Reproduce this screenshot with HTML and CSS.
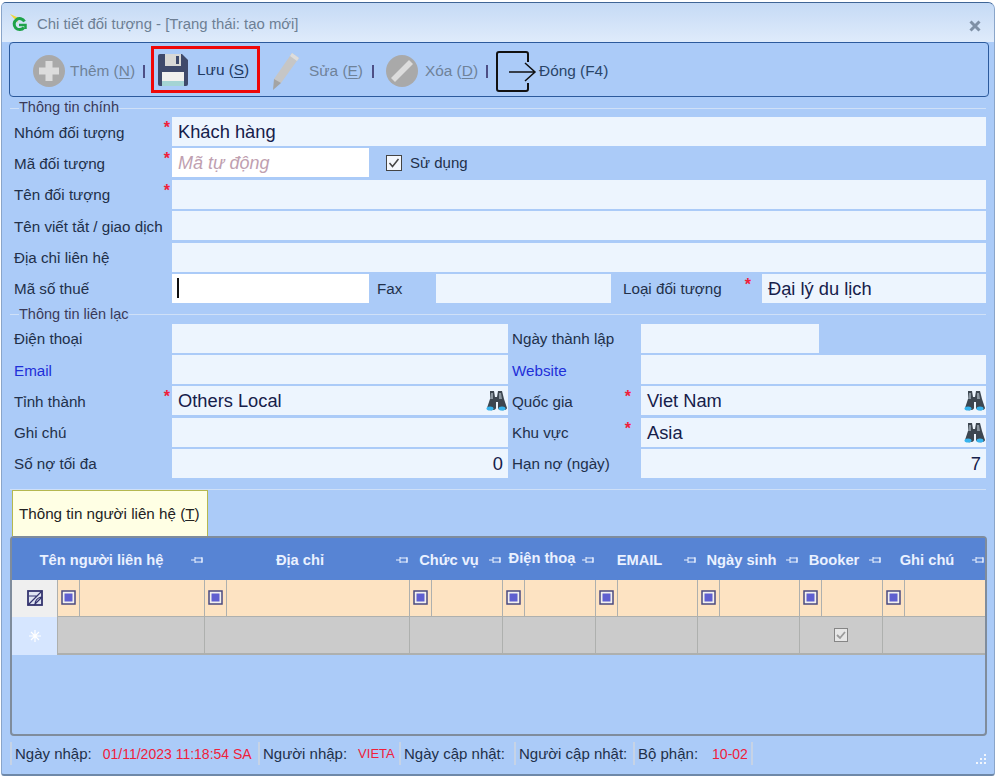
FILE: index.html
```html
<!DOCTYPE html>
<html lang="vi">
<head>
    <meta charset="UTF-8">
    <meta name="viewport" content="width=device-width, initial-scale=1.0">
    <title>Chi tiết đối tượng</title>
    <link rel="stylesheet" href="styles.css">
</head>
<body>

<svg class="defs" width="0" height="0">
    <symbol id="pin" viewBox="0 0 12 10">
        <path d="M0 5H4M4 2V8M4 3H11V7H4M11 2V8" fill="none" stroke="#eaf1ff" stroke-width="1"/>
    </symbol>
    <symbol id="binoc" viewBox="0 0 24 22">
        <path d="M6 1h4l1 6h2l1-6h4l2 8 3 9c0 3-9 3-9 0v-6h-2v6c0 3-9 3-9 0l3-9z" fill="#3d4650"/>
        <path d="M7 3h2v6H6zM15 3h2l1 6h-3z" fill="#8b96a0"/>
        <ellipse cx="6" cy="18.500" rx="3.500" ry="2" fill="#37b4ee"/>
        <ellipse cx="18" cy="18.500" rx="3.500" ry="2" fill="#37b4ee"/>
    </symbol>
    <symbol id="filter" viewBox="0 0 15 15">
        <rect x="1" y="1" width="13" height="13" fill="#f2f0ee" stroke="#4a4a80" stroke-width="1.500"/>
        <rect x="3.500" y="3.500" width="8" height="8" fill="#5f5fd0"/>
    </symbol>
</svg>

<div class="window">
    <div class="titlebar">
        <svg class="logo" width="20" height="18" viewBox="0 0 20 18">
            <path d="M1 0L12 5 8 6 9 9z" fill="#f0d83c"/>
            <path d="M15.500 7.500A5.500 5.500 0 1 0 15 13.500" fill="none" stroke="#1fa34a" stroke-width="3"/>
            <path d="M10 11h6.500v4" fill="none" stroke="#1fa34a" stroke-width="2.500"/>
        </svg>
        <span class="title-text">Chi tiết đối tượng - [Trạng thái: tạo mới]</span>
        <svg class="close" width="12" height="12" viewBox="0 0 12 12">
            <path d="M1.500 1.500L10.500 10.500M10.500 1.500L1.500 10.500" stroke="#7f90a5" stroke-width="3"/>
        </svg>
    </div>

    <div class="toolbar">
        <div class="tool tool-add">
            <svg width="32" height="32" viewBox="0 0 32 32">
                <circle cx="16" cy="16" r="16" fill="#a9a9a9"/>
                <path d="M12.500 6h7v6.500H26v7h-6.500V26h-7v-6.500H6v-7h6.500z" fill="#dcdcdc"/>
            </svg>
            <span>Thêm (<u>N</u>)</span>
        </div>
        <i class="tool-sep"></i>
        <div class="tool tool-save">
            <svg width="30" height="32" viewBox="0 0 30 32">
                <path d="M0 2q0-2 2-2h22l6 6v24q0 2-2 2H2q-2 0-2-2z" fill="#3f4a6b"/>
                <path d="M7 0h16v12H7z" fill="#d9d9d6"/>
                <path d="M18 2h3v8h-3z" fill="#3f4a6b"/>
                <path d="M4 18h22v14H4z" fill="#f1f1ee"/>
                <path d="M4 27h22v5H4z" fill="#a4d4d4"/>
            </svg>
            <span>Lưu (<u>S</u>)</span>
        </div>
        <div class="tool tool-edit">
            <svg width="30" height="40" viewBox="0 0 30 40">
                <path d="M21 2l7 5-18 25-7 4 0-8z" fill="#c6c6c6"/>
                <path d="M21 2l7 5-2 3-7-5z" fill="#dddddd"/>
                <path d="M3 28l7 4-8 7z" fill="#a4a4a4"/>
            </svg>
            <span>Sửa (<u>E</u>)</span>
        </div>
        <i class="tool-sep"></i>
        <div class="tool tool-del">
            <svg width="32" height="32" viewBox="0 0 32 32">
                <circle cx="16" cy="16" r="16" fill="#a9a9a9"/>
                <path d="M5 23L23 5l4 4L9 27z" fill="#dcdcdc"/>
            </svg>
            <span>Xóa (<u>D</u>)</span>
        </div>
        <i class="tool-sep"></i>
        <div class="tool tool-close">
            <svg width="41" height="41" viewBox="0 0 41 41">
                <path d="M32 11V3q0-2-2-2H3q-2 0-2 2v35q0 2 2 2h27q2 0 2-2v-6" fill="none" stroke="#111" stroke-width="2"/>
                <path d="M13 21H38M29 12l10 9-10 9" fill="none" stroke="#111" stroke-width="1.500"/>
            </svg>
            <span>Đóng (F4)</span>
        </div>
    </div>

    <div class="legend"><span>Thông tin chính</span></div>
    <div class="rows">
        <div class="row">
            <label class="lbl">Nhóm đối tượng<b class="req">*</b></label>
            <div class="field big">Khách hàng</div>
        </div>
        <div class="row">
            <label class="lbl">Mã đối tượng<b class="req">*</b></label>
            <div class="field big auto">Mã tự động</div>
            <span class="check-box">
                <svg width="16" height="16" viewBox="0 0 16 16">
                    <rect x="0.500" y="0.500" width="15" height="15" fill="#f4f7fc" stroke="#444"/>
                    <path d="M3.500 8l3 3.500 6-7.500" fill="none" stroke="#444" stroke-width="1.500"/>
                </svg>
                Sử dụng
            </span>
        </div>
        <div class="row">
            <label class="lbl">Tên đối tượng<b class="req">*</b></label>
            <div class="field"></div>
        </div>
        <div class="row">
            <label class="lbl">Tên viết tắt / giao dịch</label>
            <div class="field"></div>
        </div>
        <div class="row">
            <label class="lbl">Địa chỉ liên hệ</label>
            <div class="field"></div>
        </div>
        <div class="row">
            <label class="lbl">Mã số thuế</label>
            <div class="field tax"><i class="caret"></i></div>
            <label class="lbl-fax">Fax</label>
            <div class="field fax"></div>
            <label class="lbl-type">Loại đối tượng<b class="req">*</b></label>
            <div class="field big">Đại lý du lịch</div>
        </div>
    </div>

    <div class="legend"><span>Thông tin liên lạc</span></div>
    <div class="rows rows-contact">
        <div class="row">
            <label class="lbl">Điện thoại</label>
            <div class="field half"></div>
            <label class="lbl-right">Ngày thành lập</label>
            <div class="field date"></div>
        </div>
        <div class="row">
            <label class="lbl link">Email</label>
            <div class="field half"></div>
            <label class="lbl-right link">Website</label>
            <div class="field"></div>
        </div>
        <div class="row">
            <label class="lbl">Tỉnh thành<b class="req">*</b></label>
            <div class="field half big">Others Local<svg class="binoc"><use href="#binoc"/></svg></div>
            <label class="lbl-right">Quốc gia<b class="req">*</b></label>
            <div class="field big">Viet Nam<svg class="binoc"><use href="#binoc"/></svg></div>
        </div>
        <div class="row">
            <label class="lbl">Ghi chú</label>
            <div class="field half"></div>
            <label class="lbl-right">Khu vực<b class="req">*</b></label>
            <div class="field big">Asia<svg class="binoc"><use href="#binoc"/></svg></div>
        </div>
        <div class="row">
            <label class="lbl">Số nợ tối đa</label>
            <div class="field half big num">0</div>
            <label class="lbl-right">Hạn nợ (ngày)</label>
            <div class="field big num">7</div>
        </div>
    </div>

    <div class="divider"></div>
    <div class="tab"><span>Thông tin người liên hệ (<u>T</u>)</span></div>

    <div class="panel">
        <div class="grid-head">
            <div class="hcell hcell-first"><span>Tên người liên hệ</span><svg class="pin"><use href="#pin"/></svg></div>
            <div class="hcell"><span>Địa chỉ</span><svg class="pin"><use href="#pin"/></svg></div>
            <div class="hcell"><span>Chức vụ</span><svg class="pin"><use href="#pin"/></svg></div>
            <div class="hcell"><span class="raised">Điện thoạ</span><svg class="pin"><use href="#pin"/></svg></div>
            <div class="hcell"><span>EMAIL</span><svg class="pin"><use href="#pin"/></svg></div>
            <div class="hcell"><span>Ngày sinh</span><svg class="pin"><use href="#pin"/></svg></div>
            <div class="hcell"><span>Booker</span><svg class="pin"><use href="#pin"/></svg></div>
            <div class="hcell"><span>Ghi chú</span><svg class="pin"><use href="#pin"/></svg></div>
        </div>
        <div class="grid-row filter-row">
            <div class="rowhead">
                <svg width="16" height="16" viewBox="0 0 16 16">
                    <rect x="1" y="1" width="14" height="14" fill="#dfe4f2" stroke="#33336e" stroke-width="1.800"/>
                    <path d="M1 15L15 1M7 15L15 7M2 6h8M8 15c0-5 2-7 6-8" fill="none" stroke="#33336e" stroke-width="1.200"/>
                </svg>
            </div>
            <div class="fcell"><span class="ficon"><svg><use href="#filter"/></svg></span></div>
            <div class="fcell"><span class="ficon"><svg><use href="#filter"/></svg></span></div>
            <div class="fcell"><span class="ficon"><svg><use href="#filter"/></svg></span></div>
            <div class="fcell"><span class="ficon"><svg><use href="#filter"/></svg></span></div>
            <div class="fcell"><span class="ficon"><svg><use href="#filter"/></svg></span></div>
            <div class="fcell"><span class="ficon"><svg><use href="#filter"/></svg></span></div>
            <div class="fcell"><span class="ficon"><svg><use href="#filter"/></svg></span></div>
            <div class="fcell"><span class="ficon"><svg><use href="#filter"/></svg></span></div>
        </div>
        <div class="grid-row new-row">
            <div class="rowhead">
                <svg width="12" height="12" viewBox="0 0 12 12">
                    <path d="M6 0V12M0 6H12M2 2L10 10M10 2L2 10" stroke="#fff" stroke-width="1.200"/>
                </svg>
            </div>
            <div class="gcell"></div>
            <div class="gcell"></div>
            <div class="gcell"></div>
            <div class="gcell"></div>
            <div class="gcell"></div>
            <div class="gcell"></div>
            <div class="gcell">
                <svg width="14" height="14" viewBox="0 0 14 14">
                    <rect x="0.500" y="0.500" width="13" height="13" fill="#e6e6e6" stroke="#858585"/>
                    <path d="M3 7l3 3 5-6" fill="none" stroke="#9a9a9a" stroke-width="1.800"/>
                </svg>
            </div>
            <div class="gcell"></div>
        </div>
    </div>

    <div class="statusbar">
        <div class="stat stat-date"><span>Ngày nhập:</span><em>01/11/2023 11:18:54 SA</em></div>
        <div class="stat stat-user"><span>Người nhập:</span><em class="narrow">VIETA</em></div>
        <div class="stat stat-upd"><span>Ngày cập nhật:</span></div>
        <div class="stat stat-updu"><span>Người cập nhật:</span></div>
        <div class="stat stat-dept"><span>Bộ phận:</span><em>10-02</em></div>
        <svg class="grip" width="14" height="14" viewBox="0 0 14 14">
            <path d="M11 1h2v2h-2zM7 5h2v2H7zM11 5h2v2h-2zM3 9h2v2H3zM7 9h2v2H7zM11 9h2v2h-2z" fill="#f2f6fc"/>
        </svg>
    </div>
</div>

</body>
</html>
```

FILE: styles.css
```css
html, body {
    margin: 0;
    padding: 0;
    height: 778px;
    overflow: hidden;
    background-color: #ffffff;
}

body {
    font-family: "Liberation Sans", Arial, sans-serif;
    font-size: 15.200px;
    color: #22304a;
    padding: 2px 3px 2px 1px;
    box-sizing: border-box;
}

.defs {
    display: block;
    height: 0;
}

.window {
    height: 774px;
    box-sizing: border-box;
    background-color: #abcbf8;
    border: 1px solid #8aa5c9;
    border-top-color: #3f6596;
    border-bottom: 2px solid #6e88a8;
    border-radius: 5px 7px 3px 3px;
    overflow: hidden;
}

.titlebar {
    height: 39px;
    display: flex;
    align-items: center;
    padding: 0 13px 0 7px;
    background: linear-gradient(#c5daf5, #dfebfb);
}

.title-text {
    margin-left: 8px;
    color: #6d7f94;
    margin-top: 2px;
    font-size: 14.900px;
}

.close {
    margin-left: auto;
    margin-top: 6px;
}

.toolbar {
    height: 55px;
    box-sizing: border-box;
    margin: 0 5px 0 7px;
    padding-top: 3px;
    border: 1px solid #2c5a9c;
    border-radius: 4px;
    background-color: #abcbf8;
    display: flex;
    align-items: center;
    color: #6f8299;
    font-size: 15.400px;
}

.tool {
    display: flex;
    align-items: center;
    white-space: nowrap;
}

.tool u {
    text-underline-offset: 2px;
}

.tool-sep {
    width: 2px;
    height: 13px;
    background-color: #4d4f86;
}

.tool-add {
    margin-left: 23px;
    gap: 5px;
    margin-right: 8px;
}

.tool-save {
    margin-left: 6px;
    margin-top: -3px;
    box-sizing: border-box;
    width: 109px;
    height: 47px;
    border: 3px solid #ef0707;
    padding-left: 4px;
    gap: 9px;
    color: #1f3a62;
}

.tool-edit {
    margin-left: 11px;
    gap: 8px;
    margin-right: 9px;
}

.tool-del {
    margin-left: 12px;
    gap: 7px;
    margin-right: 8px;
}

.tool-close {
    margin-left: 8px;
    gap: 2px;
    color: #2a4568;
}

.legend {
    height: 20px;
    margin: 0 8px 0 8px;
    display: flex;
    align-items: center;
    color: #3a3a58;
    font-size: 14.500px;
}

.legend::before,
.legend::after {
    content: "";
    height: 1px;
    background-color: #cfe0f7;
    margin-top: 2px;
}

.legend::before {
    width: 9px;
}

.legend::after {
    flex: 1;
}

.rows {
    display: flex;
    flex-direction: column;
    gap: 2.400px;
    margin: 0 8px 1px 12px;
}

.rows-contact {
    gap: 2.250px;
    margin-bottom: 0;
}

.row {
    display: flex;
    align-items: stretch;
    height: 29px;
}

.lbl,
.lbl-right,
.lbl-fax,
.lbl-type {
    display: flex;
    align-items: center;
    position: relative;
    flex: none;
    white-space: nowrap;
    padding-top: 1px;
    box-sizing: border-box;
}

.lbl {
    width: 158px;
}

.lbl-right {
    width: 129px;
}

.lbl-fax {
    width: 67px;
    padding-left: 8px;
}

.lbl-type {
    width: 151px;
    padding-left: 12px;
}

.link {
    color: #1f2fd8;
}

.req {
    position: absolute;
    right: 2px;
    top: 2px;
    color: #f0203a;
    font-size: 16px;
    font-weight: bold;
}

.lbl-right .req {
    right: 10px;
}

.lbl-type .req {
    right: 11px;
}

.field {
    flex: 1;
    min-width: 0;
    box-sizing: border-box;
    padding: 0 6px;
    display: flex;
    align-items: center;
    background-color: #edf5fe;
    position: relative;
}

.big {
    font-size: 18.300px;
    color: #16204a;
    padding-top: 1px;
}

.auto {
    flex: none;
    width: 197px;
    background-color: #ffffff;
    color: #c0a0b0;
    font-style: italic;
    font-size: 18px;
}

.check-box {
    display: flex;
    align-items: center;
    gap: 8px;
    margin-left: 17px;
    font-size: 15px;
}

.tax {
    flex: none;
    width: 197px;
    background-color: #ffffff;
}

.caret {
    width: 2px;
    height: 20px;
    margin-left: -1px;
    background-color: #111111;
}

.fax {
    flex: none;
    width: 175px;
}

.half {
    flex: none;
    width: 336px;
    margin-right: 4px;
}

.date {
    flex: none;
    width: 178px;
}

.num {
    justify-content: flex-end;
    padding-right: 5px;
}

.binoc {
    position: absolute;
    right: 0;
    top: 4px;
    width: 24px;
    height: 22px;
}

.divider {
    height: 1px;
    margin: 11px 8px 0 8px;
    background-color: #cfe0f7;
}

.tab {
    box-sizing: border-box;
    width: 196px;
    height: 46px;
    margin-left: 10px;
    display: flex;
    align-items: center;
    padding-left: 6px;
    background-color: #ffffe4;
    border: 1px solid #b5b84f;
    border-bottom-width: 0;
    color: #222222;
    white-space: nowrap;
}

.panel {
    box-sizing: border-box;
    height: 200px;
    margin: 0 7px 0 8px;
    border: 2px solid #7f8c9c;
    border-radius: 4px;
}

.grid-head,
.grid-row {
    display: grid;
    grid-template-columns: 45px 147px 205px 93px 93px 102px 102px 83px 103px;
}

.grid-head {
    box-sizing: border-box;
    height: 42px;
    padding-top: 2px;
    background-color: #5784d4;
    grid-template-columns: 192px 205px 93px 93px 102px 102px 83px 103px;
    color: #eaf1ff;
    font-weight: bold;
    font-size: 14.700px;
}

.hcell {
    display: flex;
    align-items: center;
    white-space: nowrap;
    overflow: hidden;
    padding-right: 1px;
}

.hcell span {
    flex: 1;
    text-align: center;
}

.hcell .raised {
    margin-top: -4px;
}

.pin {
    flex: none;
    width: 12px;
    height: 10px;
}

.filter-row {
    height: 37px;
    background-color: #fde3c2;
}

.new-row {
    height: 38px;
    background-color: #cbcbcb;
}

.rowhead {
    display: flex;
    align-items: center;
    justify-content: center;
}

.filter-row .rowhead {
    background-color: #efefef;
}

.new-row .rowhead {
    background-color: #d6e6ff;
}

.fcell,
.gcell {
    box-sizing: border-box;
    border-left: 1px solid #aeb0ae;
    border-bottom: 1px solid #aeb0ae;
}

.fcell {
    display: flex;
}

.ficon {
    box-sizing: border-box;
    width: 22px;
    display: flex;
    align-items: center;
    justify-content: center;
    border-right: 1px solid #aeb0ae;
}

.ficon svg {
    width: 15px;
    height: 15px;
}

.gcell {
    display: flex;
    align-items: center;
    justify-content: center;
    border-bottom-width: 2px;
}

.statusbar {
    display: flex;
    align-items: center;
    height: 26px;
    margin: 5px 0 0 8px;
    position: relative;
    font-size: 15px;
}

.stat {
    height: 23px;
    display: flex;
    align-items: center;
    box-sizing: border-box;
    border-left: 2px solid #c6d3e6;
    padding-left: 3px;
    white-space: nowrap;
}

.stat em {
    font-style: normal;
    color: #f0203a;
    font-size: 14px;
}

.stat .narrow {
    font-size: 13px;
}

.stat-date {
    width: 248px;
}

.stat-date em {
    margin-left: 11px;
}

.stat-user {
    width: 141px;
}

.stat-user em {
    margin-left: 11px;
}

.stat-upd {
    width: 115px;
}

.stat-updu {
    width: 119px;
}

.stat-dept {
    width: 120px;
    border-right: 2px solid #c6d3e6;
}

.stat-dept em {
    margin-left: 14px;
}

.grip {
    position: absolute;
    right: 7px;
    bottom: 0;
}
```
